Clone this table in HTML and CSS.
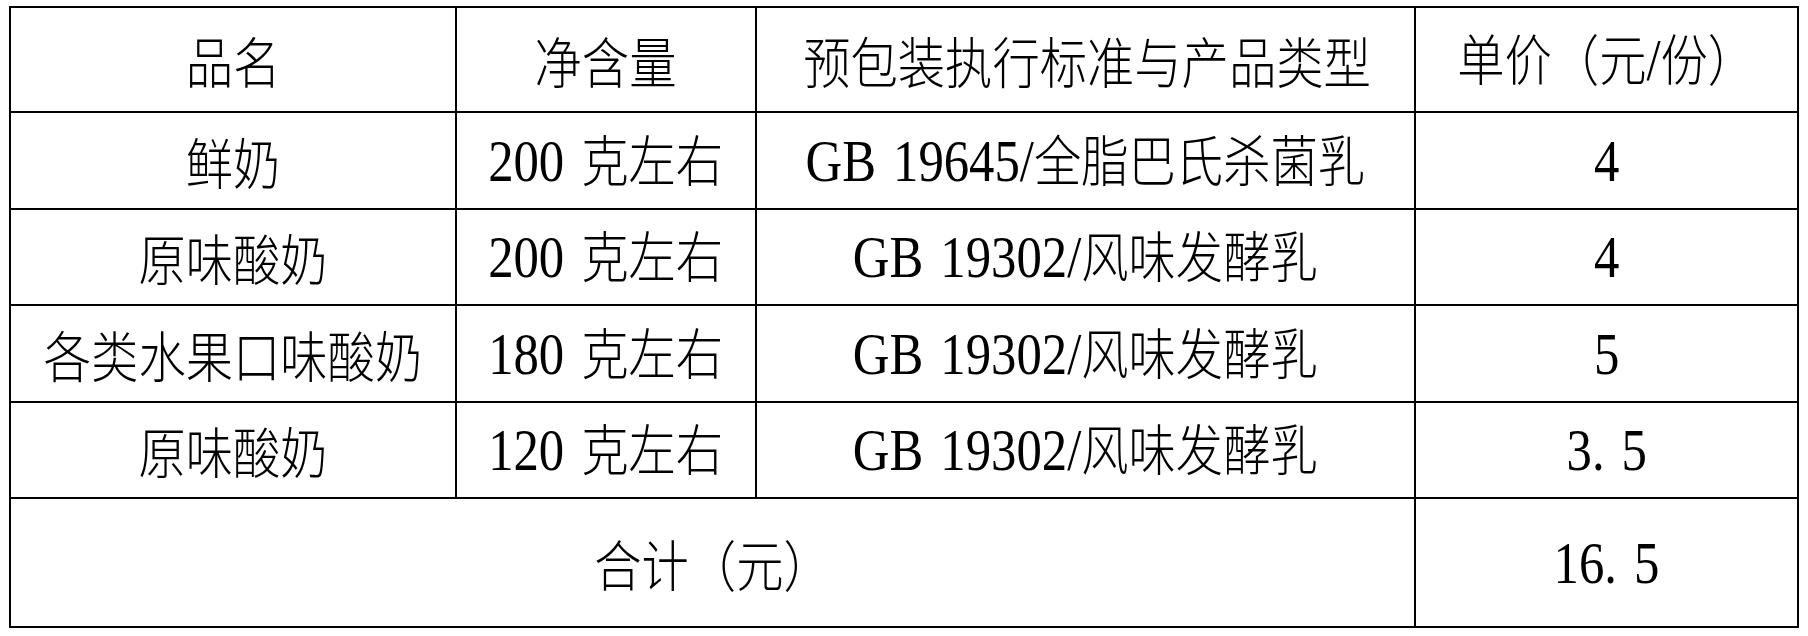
FILE: index.html
```html
<!DOCTYPE html>
<html lang="zh-CN">
<head>
<meta charset="utf-8">
<link rel="stylesheet" href="styles.css">
</head>
<body>
<table class="tbl">
  <colgroup>
    <col class="c1"><col class="c2"><col class="c3"><col class="c4">
  </colgroup>
  <tr class="head">
    <td><span class="t">品名</span></td>
    <td><span class="t">净含量</span></td>
    <td><span class="t">预包装执行标准与产品类型</span></td>
    <td><span class="t">单价（元<span class="l">/</span>份）</span></td>
  </tr>
  <tr class="row">
    <td><span class="t">鲜奶</span></td>
    <td><span class="t"><span class="l">200 </span>克左右</span></td>
    <td><span class="t"><span class="l">GB 19645/</span>全脂巴氏杀菌乳</span></td>
    <td><span class="t"><span class="l">4</span></span></td>
  </tr>
  <tr class="row">
    <td><span class="t">原味酸奶</span></td>
    <td><span class="t"><span class="l">200 </span>克左右</span></td>
    <td><span class="t"><span class="l">GB 19302/</span>风味发酵乳</span></td>
    <td><span class="t"><span class="l">4</span></span></td>
  </tr>
  <tr class="row">
    <td><span class="t">各类水果口味酸奶</span></td>
    <td><span class="t"><span class="l">180 </span>克左右</span></td>
    <td><span class="t"><span class="l">GB 19302/</span>风味发酵乳</span></td>
    <td><span class="t"><span class="l">5</span></span></td>
  </tr>
  <tr class="row">
    <td><span class="t">原味酸奶</span></td>
    <td><span class="t"><span class="l">120 </span>克左右</span></td>
    <td><span class="t"><span class="l">GB 19302/</span>风味发酵乳</span></td>
    <td><span class="t"><span class="l">3. 5</span></span></td>
  </tr>
  <tr class="total">
    <td colspan="3"><span class="t">合计（元）</span></td>
    <td><span class="t"><span class="l">16. 5</span></span></td>
  </tr>
</table>
</body>
</html>
```

FILE: styles.css
```css
html, body {
  margin: 0;
  padding: 0;
  background: #fff;
}
body {
  padding: 6px 0 0 9px;
}
.tbl {
  border-collapse: collapse;
  table-layout: fixed;
  width: 1790px;
  font-family: "Noto Sans CJK SC", "Liberation Serif", sans-serif;
  font-weight: 300;
  font-size: 55px;
  color: #000;
}
.c1 { width: 446px; }
.c2 { width: 300px; }
.c3 { width: 659px; }
.c4 { width: 383px; }
.tbl td {
  border: 2px solid #000;
  padding: 0;
  text-align: center;
  vertical-align: middle;
  white-space: nowrap;
  overflow: visible;
  line-height: 1;
}
.head { height: 105px; }
.row { height: 96.5px; }
.total { height: 129px; }
.t {
  display: inline-block;
  transform: scaleX(0.86);
  transform-origin: 50% 50%;
  white-space: nowrap;
}
.l {
  font-family: "Liberation Serif", serif;
  font-weight: 400;
  font-size: 59px;
  word-spacing: 5px;
  white-space: pre;
}
```
